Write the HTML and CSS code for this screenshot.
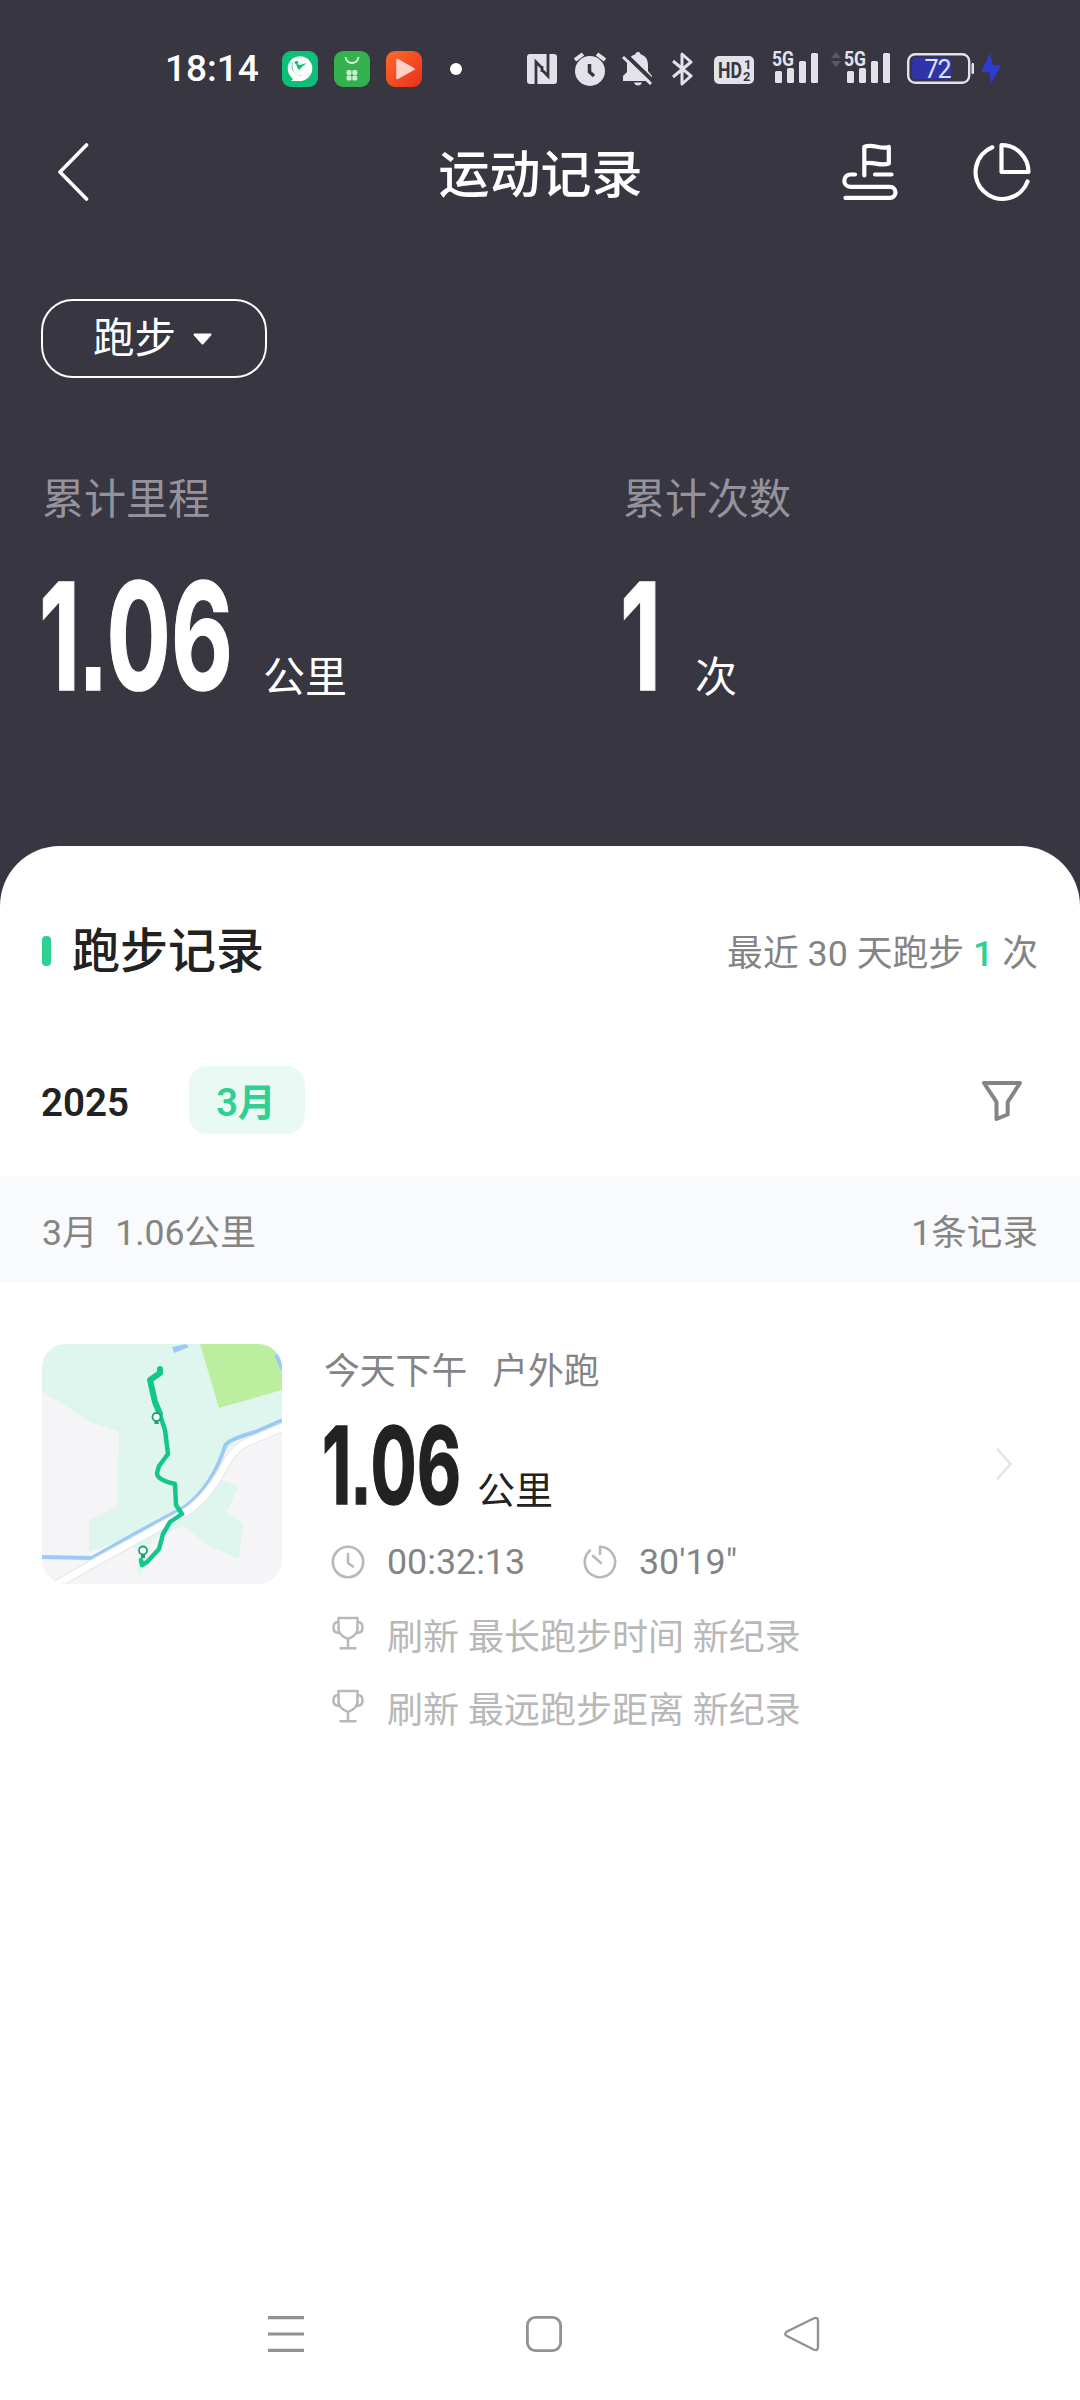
FILE: index.html
```html
<!DOCTYPE html>
<html lang="zh-CN">
<head>
<meta charset="utf-8">
<title>运动记录</title>
<link rel="stylesheet" href="styles.css">
</head>
<body>
<div class="status">
  <span class="clock">18:14</span>
  <div class="apps">
    <svg width="36" height="36" viewBox="0 0 36 36"><rect width="36" height="36" rx="9" fill="#0cc078"/><circle cx="18" cy="17.500" r="12.300" fill="#fff"/><path d="M8 22q2 4 3 6l-2 2h10l4-2z" fill="#fff"/><path d="M13 8c-6 6-4 15 7 17-8 0-13-10-7-17z" fill="#0cc078"/><path d="M14 12.500l4 1.500 7-2-4 3-4 4-2-3z" fill="#0cc078"/><circle cx="14.500" cy="11.500" r="1.800" fill="#0cc078"/></svg>
    <svg width="36" height="36" viewBox="0 0 36 36"><rect width="36" height="36" rx="9" fill="#34b04e"/><path d="M11.500 6c1 8 12 8 13 0" fill="none" stroke="#d4f5d6" stroke-width="2"/><g fill="#c9f0cd"><rect x="12.500" y="19" width="5" height="5" rx="1.500"/><rect x="18.300" y="19" width="5" height="5" rx="1.500"/><rect x="12.500" y="24.500" width="5" height="5" rx="1.500"/><rect x="18.300" y="24.500" width="5" height="5" rx="1.500"/></g></svg>
    <svg width="36" height="36" viewBox="0 0 36 36"><defs><linearGradient id="video" x1="0" y1="0" x2="1" y2="1"><stop offset="0" stop-color="#ff6a2b"/><stop offset="1" stop-color="#e7301c"/></linearGradient></defs><rect width="36" height="36" rx="9" fill="url(#video)"/><path d="M11.500 9v18L27.500 18z" fill="#ffd0c6" stroke="#ffd0c6" stroke-width="2.500" stroke-linejoin="round"/></svg>
  </div>
  <i class="dot"></i>
  <svg class="nfc" width="30" height="30" viewBox="0 0 30 30"><rect width="30" height="30" rx="3" fill="#e2e2ea"/><path d="M9 30V8l6 6v4M21 0v22l-6-6v-4" fill="none" stroke="#373641" stroke-width="2.800"/></svg>
  <svg class="alarm" width="32" height="34" viewBox="0 0 32 34"><circle cx="16" cy="19" r="15" fill="#e2e2ea"/><path d="M1 8l8-6M31 8l-8-6" stroke="#e2e2ea" stroke-width="4"/><path d="M15.500 12v8l4.500 4" fill="none" stroke="#373641" stroke-width="3.500"/></svg>
  <svg class="bell" width="32" height="34" viewBox="0 0 32 34"><path d="M16 0c2 0 2.500 1 2.500 2.300C24 4 26 8 26 13v6l4 5v5H1v-5l4-4v-7C5 8 8 4 13.500 2.300 13.500 1 14 0 16 0z" fill="#e2e2ea"/><path d="M12 30.500h8c-1 4-7 4-8 0z" fill="#e2e2ea"/><path d="M4 3l28 27" stroke="#373641" stroke-width="4"/><path d="M1 5l28 27" stroke="#e2e2ea" stroke-width="3"/></svg>
  <svg class="bt" width="22" height="34" viewBox="0 0 22 34"><path d="M1 9l18 15-9 8V2l9 8L1 25" fill="none" stroke="#e2e2ea" stroke-width="3" stroke-linejoin="round"/></svg>
  <svg class="hd" width="40" height="28" viewBox="0 0 40 28"><rect width="40" height="28" rx="5" fill="#e2e2ea"/><g fill="#373641" font-family="Roboto, sans-serif" font-weight="700"><text x="4" y="22" font-size="22" textLength="24" lengthAdjust="spacingAndGlyphs">HD</text><text x="30" y="13" font-size="13">1</text><text x="29" y="25" font-size="13">2</text></g></svg>
  <svg class="sig" width="47" height="44" viewBox="0 -8 47 44"><text x="0" y="15" fill="#e2e2ea" font-family="Roboto, sans-serif" font-size="21" font-weight="700" textLength="22" lengthAdjust="spacingAndGlyphs">5G</text><g fill="#e2e2ea"><rect x="3" y="20" width="7" height="12" rx="1.500"/><rect x="15" y="17" width="7" height="15" rx="1.500"/><rect x="27" y="10" width="7" height="22" rx="1.500"/><rect x="39" y="2" width="7" height="30" rx="1.500"/></g></svg>
  <svg class="updown" width="10" height="16" viewBox="0 0 10 16"><path d="M0 6l5-6 5 6zM0 9h10l-5 6z" fill="#5b5a64"/></svg>
  <svg class="sig2" width="47" height="44" viewBox="0 -8 47 44"><text x="0" y="15" fill="#e2e2ea" font-family="Roboto, sans-serif" font-size="21" font-weight="700" textLength="22" lengthAdjust="spacingAndGlyphs">5G</text><g fill="#e2e2ea"><rect x="3" y="20" width="7" height="12" rx="1.500"/><rect x="15" y="17" width="7" height="15" rx="1.500"/><rect x="27" y="10" width="7" height="22" rx="1.500"/><rect x="39" y="2" width="7" height="30" rx="1.500"/></g></svg>
  <svg class="batt" width="68" height="32" viewBox="0 0 68 32"><rect x="5" y="5" width="39" height="21" rx="3" fill="#2f35a8"/><rect x="1.200" y="1.200" width="61" height="28.600" rx="7" fill="none" stroke="#e2e2ea" stroke-width="2.400"/><rect x="64.500" y="10" width="2.500" height="11" rx="1" fill="#e2e2ea"/><text x="31" y="24.500" fill="#e2e2f4" font-family="Roboto, sans-serif" font-size="25" text-anchor="middle" textLength="27">72</text></svg>
  <svg class="bolt" width="20" height="32" viewBox="0 0 20 32"><path d="M9 0L0 19h8l2 12L20 12h-8z" fill="#2f3bd0"/></svg>
</div>

<header class="topbar">
  <svg class="back" width="32" height="60" viewBox="0 0 32 60"><path d="M29.500 3L3 30l26.500 27" fill="none" stroke="#fff" stroke-width="3.600" stroke-linecap="round" stroke-linejoin="round"/></svg>
  <h1>运动记录</h1>
  <div class="actions">
    <svg width="60" height="60" viewBox="0 0 60 60"><g fill="none" stroke="#fff" stroke-width="4.200" stroke-linecap="round" stroke-linejoin="round"><path d="M25.300 33.500V5c8-4 16 3 24.500 0v16.500c-8.500 3.500-16.500-3-24.500 0"/><path d="M36 32.500h16.500M16 32.500h-4.500a6.200 6.200 0 0 0 0 12.400h39.500a5.500 5.500 0 0 1 0 11H6.500"/></g></svg>
    <svg width="60" height="60" viewBox="0 0 60 60"><g fill="none" stroke="#fff" stroke-width="4.200" stroke-linecap="round" stroke-linejoin="round"><path d="M20.300 5.300A26.800 26.800 0 1 0 55.500 39.500"/><path d="M29.500 3v27h27A27 27 0 0 0 29.500 3z"/></g></svg>
  </div>
</header>

<button class="sport">跑步<svg width="19" height="12" viewBox="0 0 19 12"><path d="M1.500 1.500h16L9.500 10.500z" fill="#fff" stroke="#fff" stroke-width="2" stroke-linejoin="round"/></svg></button>

<section class="stats">
  <div>
    <p class="label">累计里程</p>
    <p class="value"><span class="num-box w-full"><b class="num">1<span class="point">.</span>06</b></span><span class="unit">公里</span></p>
  </div>
  <div>
    <p class="label">累计次数</p>
    <p class="value"><span class="num-box w-one"><b class="num">1</b></span><span class="unit">次</span></p>
  </div>
</section>

<main class="sheet">
  <div class="heading">
    <i class="mark"></i>
    <h2>跑步记录</h2>
    <span class="recent">最近 30 天跑步 <em>1</em> 次</span>
  </div>
  <div class="months">
    <span class="year">2025</span>
    <span class="chip">3月</span>
    <svg class="filter" width="42" height="42" viewBox="0 0 42 42"><path d="M3 3h36L26.700 22v12.500L15.500 39V22z" fill="none" stroke="#848484" stroke-width="4" stroke-linejoin="round"/></svg>
  </div>
  <div class="summary"><span>3月&nbsp; 1.06公里</span><span>1条记录</span></div>
  <article class="record">
    <svg class="map" width="240" height="240" viewBox="0 0 240 240">
      <rect width="240" height="240" fill="#f5f5f7"/>
      <path d="M0 0h240v73l-40 18-20 20-18 30-12 18 14-5 15-18 18 6-12 26 16 12-4 35-28-12-28-21-30 13-15 44H97l-2-33-15-10-33 12V176l28-13 2-75-30-10-20-14L0 48z" fill="#def6ed"/>
      <path d="M158 0h82v46l-63 18z" fill="#bcee9f"/>
      <path d="M130 3l14-3 3 3-15 6z" fill="#9bcaf8"/>
      <path d="M234 11q4 7 6 14M0 213l50 1 48-27 45-24q28-22 40-61 2-6 30-14l27-12" fill="none" stroke="#9bcaf8" stroke-width="4"/>
      <path d="M10 243l42-24 85-47q25-12 45-49 12-22 28-27l34-14" fill="none" stroke="#e4e6e8" stroke-width="9"/>
      <path d="M10 243l42-24 85-47q25-12 45-49 12-22 28-27l34-14" fill="none" stroke="#fff" stroke-width="7"/>
      <path d="M118 25v4l-10 7 5 22 6 16 4 12 3 24-9 12-2 7q0 7 18 11l1 21 6 9-12 8-7 12-4 15-12 13-5 3-1-5" fill="none" stroke="#13c68c" stroke-width="4.500" stroke-linecap="round" stroke-linejoin="round"/>
      <path d="M118 25v4l-10 7 5 22 5 12" fill="none" stroke="#13c68c" stroke-width="6" stroke-linecap="round" stroke-linejoin="round"/>
      <path d="M114.500 74v6M101 208v6" stroke="#1b9f75" stroke-width="4"/>
      <circle cx="114.500" cy="73" r="4" fill="#fff" stroke="#239e77" stroke-width="1.800"/>
      <circle cx="101" cy="206.500" r="4" fill="#fff" stroke="#239e77" stroke-width="1.800"/>
    </svg>
    <div class="detail">
      <p class="when"><span>今天下午</span><span>户外跑</span></p>
      <p class="dist"><span class="num-box"><b class="num">1<span class="point">.</span>06</b></span><span class="km">公里</span></p>
      <p class="row"><svg width="34" height="34" viewBox="0 0 34 34"><g fill="none" stroke="#b8b8b8" stroke-width="2.600" stroke-linecap="round" stroke-linejoin="round"><circle cx="17" cy="17" r="15.200"/><path d="M17 9v9l5 3.500"/></g></svg><span class="time">00:32:13</span><svg width="34" height="34" viewBox="0 0 34 34"><g fill="none" stroke="#b8b8b8" stroke-width="2.600" stroke-linecap="round" stroke-linejoin="round"><path d="M7 5.500A15.200 15.200 0 1 0 17 1.800V9M10 11l8 7"/></g></svg><span>30'19"</span></p>
      <p class="row best"><svg width="34" height="34" viewBox="0 0 34 34"><g fill="none" stroke="#b8b8b8" stroke-width="2.500" stroke-linecap="round" stroke-linejoin="round"><path d="M7.500 2h19v11c0 6-6 8.500-9.500 10-3.500-1.500-9.500-4-9.500-10zM7.500 6.500c-5-1-5 3.500-5 5.500 0 3 1.500 5 6 5M26.500 6.500c5-1 5 3.500 5 5.500 0 3-1.500 5-6 5M17 23v9M9.500 32.200h15"/></g></svg><span>刷新 最长跑步时间 新纪录</span></p>
      <p class="row best"><svg width="34" height="34" viewBox="0 0 34 34"><g fill="none" stroke="#b8b8b8" stroke-width="2.500" stroke-linecap="round" stroke-linejoin="round"><path d="M7.500 2h19v11c0 6-6 8.500-9.500 10-3.500-1.500-9.500-4-9.500-10zM7.500 6.500c-5-1-5 3.500-5 5.500 0 3 1.500 5 6 5M26.500 6.500c5-1 5 3.500 5 5.500 0 3-1.500 5-6 5M17 23v9M9.500 32.200h15"/></g></svg><span>刷新 最远跑步距离 新纪录</span></p>
    </div>
    <svg class="go" width="18" height="34" viewBox="0 0 18 34"><path d="M2 1.500L15.500 17 2 32.500" fill="none" stroke="#e4e4e4" stroke-width="2.500"/></svg>
  </article>
  <nav class="sysnav">
    <svg width="36" height="36" viewBox="0 0 36 36"><path d="M0 1.700h36M0 18h36M0 34.300h36" stroke="#929292" stroke-width="3.200"/></svg>
    <svg width="36" height="36" viewBox="0 0 36 36"><rect x="1.400" y="1.400" width="33.200" height="33.200" rx="8" fill="none" stroke="#929292" stroke-width="2.800"/></svg>
    <svg width="36" height="36" viewBox="0 0 36 36"><path d="M29.500 2.500Q34 .5 34 5v26q0 4.500-4.500 2.500L3 20Q-.5 18 3 15.500z" fill="none" stroke="#929292" stroke-width="2.400"/></svg>
  </nav>
</main>
</body>
</html>
```
FILE: styles.css
```css
* { box-sizing: border-box; margin: 0; padding: 0; }

body {
  width: 1080px;
  height: 2400px;
  display: flex;
  flex-direction: column;
  background: #373641;
  color: #fff;
  font-family: Roboto, "Noto Sans CJK SC", sans-serif;
  font-size: 35.8px;
}

svg { display: block; flex: none; }
i, em { font-style: normal; }

/* system status bar */
.status { height: 138px; padding-left: 165px; display: flex; align-items: center; flex: none; }
.clock { width: 117px; font-size: 37px; line-height: 48px; font-weight: 500; }
.apps { display: flex; gap: 16px; }
.dot { width: 12px; height: 12px; margin-left: 28px; border-radius: 50%; background: #fff; }
.nfc { margin-left: 65px; }
.alarm { margin-left: 17px; }
.bell { margin-left: 16px; }
.bt { margin-left: 18px; }
.hd { margin-left: 20px; margin-top: 1px; }
.sig { margin-left: 18px; margin-bottom: 8px; }
.updown { margin-left: 12px; margin-bottom: 18px; }
.sig2 { margin-left: 3px; margin-bottom: 8px; }
.batt { margin-left: 16px; }
.bolt { margin-left: 6px; }

/* title bar */
.topbar { height: 70px; padding: 0 48px 0 57px; display: grid; grid-template-columns: 1fr auto 1fr; align-items: center; flex: none; margin-top: -5px; margin-bottom: 5px; }
.topbar h1 { font-size: 51px; line-height: 70px; font-weight: 500; padding-top: 8px; margin-left: -8px; }
.actions { display: flex; justify-content: flex-end; gap: 73px; }

.sport {
  width: 226px; height: 79px; margin: 91px 0 0 41px; padding-left: 50px; flex: none;
  display: flex; align-items: center; gap: 17px;
  border: 2px solid #fff; border-radius: 32px; background: none;
  color: #fff; font: inherit; font-size: 41.500px; line-height: 64px;
}

.stats { display: grid; grid-template-columns: 581px 1fr; padding: 92px 0 0 42px; height: 468px; flex: none; }
.label { font-size: 42px; line-height: 60px; color: #94939b; }
.value { display: flex; align-items: baseline; margin-top: 30px; }
.num {
  display: inline-block; margin-left: -3px;
  font-family: Inter, Roboto, sans-serif; font-size: 149px; line-height: 152px; font-weight: 700;
  white-space: nowrap; -webkit-text-stroke: 1.500px currentColor;
  transform: scaleX(.64); transform-origin: 0 50%;
}
.point { font-family: "Liberation Sans", sans-serif; }
.num-box { display: block; flex: none; }
.w-full { width: 221px; }
.w-one { width: 72px; }
.unit { font-size: 42px; line-height: 60px; position: relative; top: 2px; }

/* records sheet */
.sheet { flex: 1; display: flex; flex-direction: column; background: #fff; border-radius: 60px 60px 0 0; color: #848484; }
.heading { display: flex; align-items: center; height: 120px; margin-top: 45px; padding: 0 42px 0 42px; }
.mark { width: 9px; height: 30px; border-radius: 4px; background: #2fd092; }
.heading h2 { margin-left: 21px; margin-bottom: 8px; font-size: 48px; font-weight: 500; color: #222; }
.recent { margin-left: auto; margin-bottom: 3px; }
.recent em { color: #2fd092; font-weight: 500; }

.months { display: flex; align-items: center; height: 68px; margin-top: 55px; padding: 0 57px 0 41px; }
.year { width: 148px; padding-top: 5px; font-size: 38.500px; font-weight: 600; color: #222; }
.chip { width: 116px; height: 68px; border-radius: 18px; background: #e9faf4; color: #2fd092; font-size: 38px; line-height: 74px; font-weight: 600; text-align: center; padding-right: 2px; }
.filter { margin-left: auto; margin-top: 1px; }

.summary { display: flex; justify-content: space-between; align-items: center; height: 107px; margin-top: 42px; padding: 0 42px 1px; background: #f9fafc; font-size: 35.6px; }

.record { display: flex; align-items: flex-start; margin-top: 61px; padding: 0 67px 0 42px; }
.map { border-radius: 24px; }
.detail { margin-left: 42px; flex: 1; }
.when { display: flex; gap: 25px; line-height: 56px; }
.dist { display: flex; align-items: baseline; margin-top: 10px; color: #222; }
.dist .num-box { width: 153px; }
.dist .num { margin-left: -2px; font-size: 107px; line-height: 110px; }
.km { font-size: 38px; line-height: 50px; }
.row { display: flex; align-items: center; height: 73px; padding-left: 7px; margin-top: 3px; }
.row + .row { margin-top: -1px; }
.row + .row + .row { margin-top: 0; }
.row svg { margin-right: 22px; }
.time { width: 196px; }
.best { color: #b8b8b8; font-size: 36px; }
.best svg { margin-bottom: 2px; }
.go { margin-top: 103px; }

.sysnav { display: flex; justify-content: space-between; margin-top: auto; padding: 0 260px 48px 268px; }
```
